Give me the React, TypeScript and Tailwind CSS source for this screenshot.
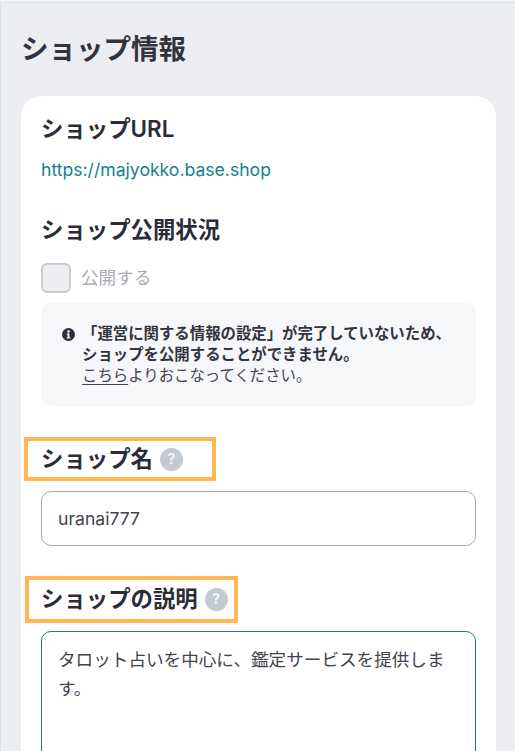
const font = { fontFamily: '"Inter", "Noto Sans CJK JP", sans-serif' };

const HelpIcon = () => (
  <span className="flex h-[23px] w-[23px] shrink-0 items-center justify-center rounded-full bg-[#c3cad6] text-[14px] font-bold leading-none text-[#f3f5f8]">
    ?
  </span>
);

const InfoIcon = () => (
  <svg viewBox="0 0 16 16" className="mr-[7px] mt-[5px] h-[13px] w-[13px] shrink-0">
    <circle cx="8" cy="8" r="8" fill="#2c2c38" />
    <circle cx="8" cy="4.2" r="1.5" fill="#fff" />
    <path d="M5.8 6.8h3.3v4.7h1.2v1.5H5.8v-1.5H7V8.3H5.8z" fill="#fff" />
  </svg>
);

export default function App() {
  return (
    <div style={font} className="h-[751px] w-[515px] overflow-hidden bg-[#f1f2f5] pt-[2px] text-[#2c2c38]">
      <div className="h-full border-l border-t border-[#dde1ea] bg-[#ecedf1] pl-5 pr-[19px]">
        <h1 className="mt-[27px] h-[38px] text-[27.5px] font-bold leading-[38px] text-[#33333d]">ショップ情報</h1>
        <div className="mt-[28px] rounded-t-[20px] bg-white px-5 pt-[18px] pb-10">
          <h2 className="h-[30px] text-[22.4px] font-semibold leading-[30px]">ショップURL</h2>
          <p className="mt-[14px] h-[24px] text-[17.6px] leading-[24px] text-[#14808a]">https://majyokko.base.shop</p>

          <h2 className="mt-[33px] h-[30px] text-[22.4px] font-semibold leading-[30px]">ショップ公開状況</h2>
          <label className="mt-[18px] flex h-[30px] items-center">
            <span className="h-[30px] w-[30px] rounded-[6px] border-2 border-[#c8cad0] bg-[#eceef2]" />
            <span className="ml-[10px] text-[17.6px] text-[#a9acb3]">公開する</span>
          </label>

          <div className="mt-[10px] flex h-[103px] rounded-[10px] bg-[#f6f7f9] pl-[21px] pt-[20px] text-[15.4px] leading-[21px]">
            <InfoIcon />
            <div>
              <p className="font-bold text-[#33333d]">
                「運営に関する情報の設定」が完了していないため、
                <br />
                ショップを公開することができません。
              </p>
              <p className="text-[#44444e]">
                <span className="underline underline-offset-[3px]">こちら</span>よりおこなってください。
              </p>
            </div>
          </div>

          <div className="relative mt-[38px] flex h-[30px] items-center gap-[7px]">
            <span className="absolute -left-[17px] -top-[7px] h-[44px] w-[192px] border-4 border-[#ffb655]" />
            <h2 className="text-[22.4px] font-bold leading-[30px]">ショップ名</h2>
            <HelpIcon />
          </div>
          <div className="mt-[17px] flex h-[55px] items-center rounded-[10px] border border-[#a9a9ad] px-4 pt-[1px] text-[17.6px] text-[#44444e]">
            uranai777
          </div>

          <div className="relative mt-[38px] flex h-[30px] items-center gap-[7px]">
            <span className="absolute -left-[16px] -top-[8px] h-[47px] w-[213px] border-4 border-[#ffb655]" />
            <h2 className="text-[22.4px] font-bold leading-[30px]">ショップの説明</h2>
            <HelpIcon />
          </div>
          <div className="mt-[17px] h-[200px] rounded-[10px] border border-[#1c7a80] px-4 pt-[13px] text-[17.6px] leading-[29px] text-[#44444e]">
            タロット占いを中心に、鑑定サービスを提供します。
          </div>
        </div>
      </div>
    </div>
  );
}
